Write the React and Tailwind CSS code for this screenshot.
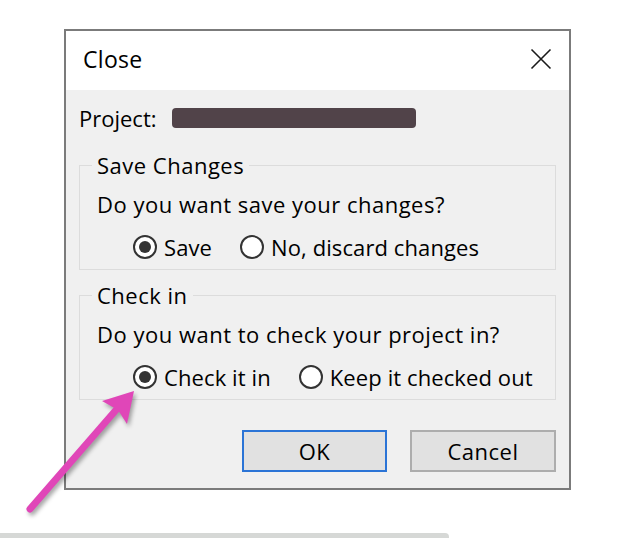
import React from "react";

const Radio = ({ checked, label, className = "" }) => (
  <div className={`flex items-center gap-[7px] ${className}`}>
    <span className="w-[24px] h-[24px] rounded-full border-2 border-[#333333] bg-white flex items-center justify-center shrink-0">
      {checked && <span className="w-[12px] h-[12px] rounded-full bg-[#333333]" />}
    </span>
    <span className="leading-[20px] whitespace-nowrap tracking-[0.1px]">{label}</span>
  </div>
);

const GroupBox = ({ title, question, children }) => (
  <div className="relative h-[105px] border border-[#dcdcdc]">
    <span className="absolute left-[12px] top-[-11px] px-[5px] leading-[20px] bg-[#f0f0f0] whitespace-nowrap">
      {title}
    </span>
    <div className="pl-[17px] pt-[28px]">
      <div className="leading-[20px] whitespace-nowrap">{question}</div>
      <div className="flex items-center mt-[21px] ml-[36px]">{children}</div>
    </div>
  </div>
);

export default function App() {
  return (
    <div
      className="relative w-[638px] h-[538px] bg-white overflow-hidden text-black"
      style={{ fontFamily: '"Open Sans", "Noto Sans", sans-serif' }}
    >
      <div className="pt-[29px] pl-[64px]">
        <div className="w-[507px] h-[461px] border-2 border-[#7b7b7b] bg-[#f0f0f0] flex flex-col text-[22px] tracking-[0.5px]">
          {/* title bar */}
          <div className="h-[59px] bg-white flex items-start justify-between pl-[17px] pr-[17px] pt-[16px]">
            <span className="text-[23px] leading-[24px] tracking-[0.3px]">Close</span>
            <svg width="22" height="22" viewBox="0 0 22 22" className="mt-[1px]">
              <path d="M1.5 1.5 L20.5 20.5 M20.5 1.5 L1.5 20.5" stroke="#1a1a1a" strokeWidth="1.6" />
            </svg>
          </div>

          {/* body */}
          <div className="px-[13px]">
            <div className="flex items-center h-[20px] mt-[18px]">
              <span className="leading-[20px] w-[93px] tracking-[0px]">Project:</span>
              <span className="w-[244px] h-[20px] rounded-[4px] bg-[#514349]" />
            </div>

            <div className="mt-[37px]">
              <GroupBox title="Save Changes" question="Do you want save your changes?">
                <Radio checked label="Save" />
                <Radio label="No, discard changes" className="ml-[28px]" />
              </GroupBox>
            </div>

            <div className="mt-[25px]">
              <GroupBox title="Check in" question="Do you want to check your project in?">
                <Radio checked label="Check it in" />
                <Radio label="Keep it checked out" className="ml-[28px]" />
              </GroupBox>
            </div>

            <div className="flex justify-end gap-[23px] mt-[30px]">
              <button className="w-[145px] h-[42px] border-2 border-[#2b74d6] bg-[#e1e1e1] leading-[20px]">
                OK
              </button>
              <button className="w-[146px] h-[42px] border-2 border-[#adadad] bg-[#e1e1e1] leading-[20px]">
                Cancel
              </button>
            </div>
          </div>
        </div>
      </div>

      <div className="mt-[43px] w-[449px] h-[5px] rounded-tr-[4px] bg-[#d6d8d6]" />

      {/* annotation arrow */}
      <svg
        className="absolute left-0 top-0 pointer-events-none drop-shadow-[2px_3px_2px_rgba(0,0,0,0.35)]"
        width="638"
        height="538"
        viewBox="0 0 638 538"
      >
        <line x1="30" y1="509" x2="116" y2="410" stroke="#e046b8" strokeWidth="7" strokeLinecap="round" />
        <path d="M134 391 L127 424 L118 410 L102 401 Z" fill="#e046b8" />
      </svg>
    </div>
  );
}
